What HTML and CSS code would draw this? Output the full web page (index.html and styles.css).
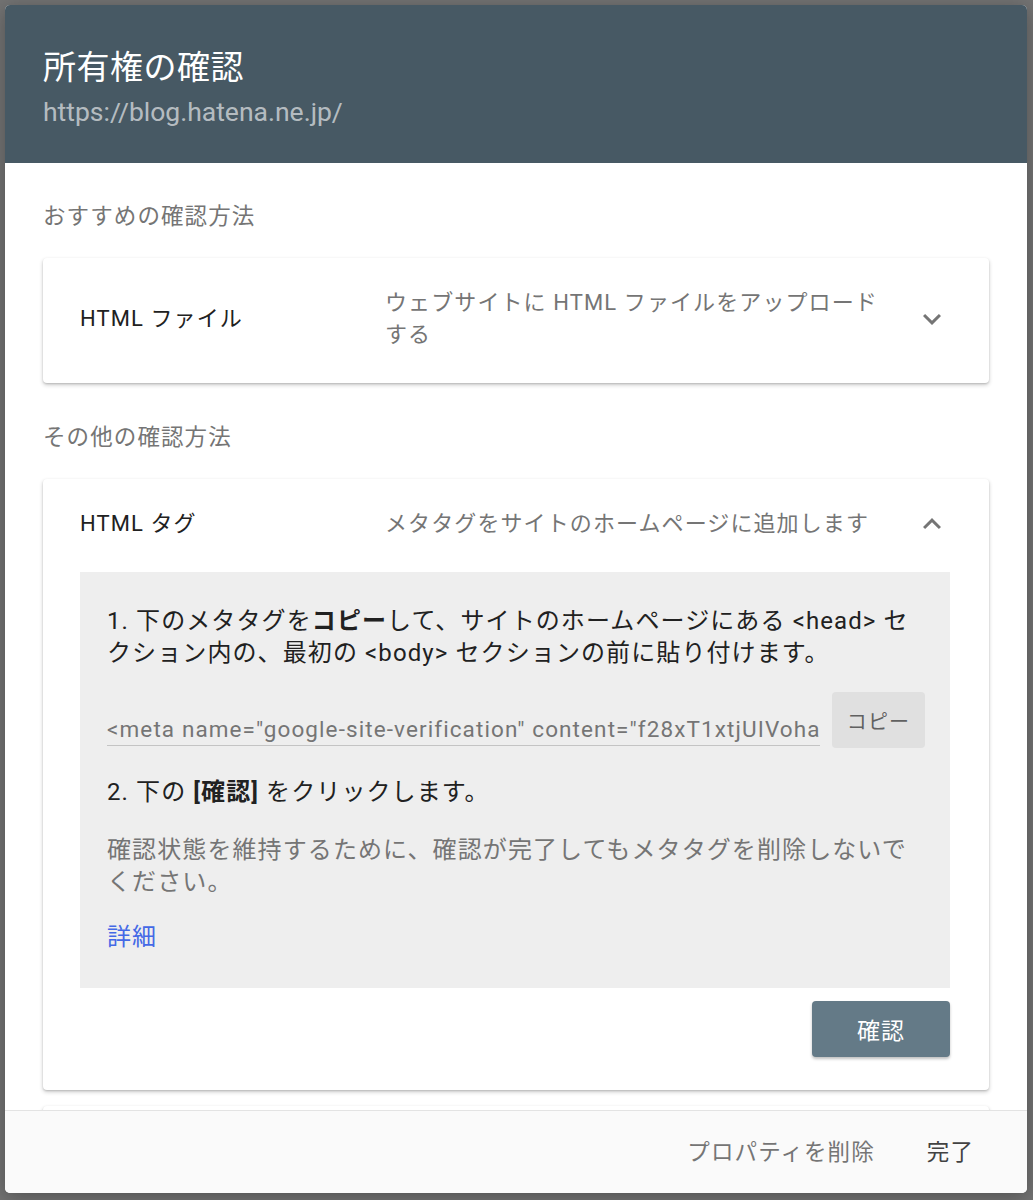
FILE: index.html
```html
<!DOCTYPE html>
<html lang="ja">
<head>
  <meta charset="utf-8">
  <title>所有権の確認</title>
  <link rel="stylesheet" href="styles.css">
</head>
<body>
  <div class="dialog">
    <div class="dialog-header">
      <div class="dialog-title">所有権の確認</div>
      <div class="dialog-url">https://blog.hatena.ne.jp/</div>
    </div>

    <div class="dialog-body">
      <div class="section-label">おすすめの確認方法</div>
      <div class="card">
        <div class="card-head">
          <div class="card-title">HTML ファイル</div>
          <div class="card-desc">ウェブサイトに HTML ファイルをアップロードする</div>
          <svg class="chevron" viewBox="0 0 24 24"><path d="M16.59 8.59L12 13.17 7.41 8.59 6 10l6 6 6-6z"/></svg>
        </div>
      </div>

      <div class="section-label second">その他の確認方法</div>
      <div class="card open">
        <div class="card-head">
          <div class="card-title">HTML タグ</div>
          <div class="card-desc">メタタグをサイトのホームページに追加します</div>
          <svg class="chevron" viewBox="0 0 24 24"><path d="M12 8l-6 6 1.41 1.41L12 10.83l4.59 4.58L18 14z"/></svg>
        </div>
        <div class="steps">
          <p class="step">1. 下のメタタグを<b>コピー</b>して、サイトのホームページにある &lt;head&gt; セクション内の、最初の &lt;body&gt; セクションの前に貼り付けます。</p>
          <div class="copy-row">
            <div class="meta-input">&lt;meta name="google-site-verification" content="f28xT1xtjUIVoha</div>
            <button class="copy-btn">コピー</button>
          </div>
          <p class="step step-two">2. 下の <b>[確認]</b> をクリックします。</p>
          <p class="note">確認状態を維持するために、確認が完了してもメタタグを削除しないでください。</p>
          <a class="more" href="#">詳細</a>
        </div>
        <div class="actions">
          <button class="verify-btn">確認</button>
        </div>
      </div>

      <!-- next method, scrolled out of view -->
      <div class="card peek"></div>
    </div>

    <div class="dialog-footer">
      <button class="text-btn muted">プロパティを削除</button>
      <button class="text-btn">完了</button>
    </div>
  </div>
</body>
</html>
```

FILE: styles.css
```css
body {
    margin: 0;
    padding: 5px 6px 7px 5px;
    background: #737373;
    font-family: Roboto, "Noto Sans CJK JP", sans-serif;
    letter-spacing: 1.1px;
}
.dialog {
    height: 1188px;
    display: flex;
    flex-direction: column;
    background: #fff;
    border-radius: 5px;
    overflow: hidden;
    box-shadow: 0 4px 20px rgba(0, 0, 0, 0.3);
}
.dialog-header {
    background: #475964;
    padding: 41px 38px 35px;
    color: #fff;
}
.dialog-title {
    font-size: 33px;
    line-height: 44px;
    letter-spacing: 0.5px;
}
.dialog-url {
    margin-top: 6px;
    font-size: 26.5px;
    line-height: 32px;
    letter-spacing: 0;
    color: rgba(255, 255, 255, 0.62);
}
.dialog-body {
    flex: 1;
    overflow: hidden;
    padding: 37px 38px 0 38px;
}
.section-label {
    font-size: 22.5px;
    line-height: 32px;
    color: #757575;
}
.section-label.second {
    margin-top: 38px;
}
.card {
    margin-top: 26px;
    background: #fff;
    border-radius: 4px;
    padding: 0 39px 0 37px;
    box-shadow: 0 2px 4px rgba(0, 0, 0, 0.2), 0 1px 2px rgba(0, 0, 0, 0.14);
}
.card + .card {
    margin-top: 16px;
}
.card.open {
    padding-bottom: 33px;
}
.card.peek {
    height: 120px;
}
.card-head {
    display: flex;
    align-items: center;
    padding: 29px 0 32px;
    font-size: 22px;
    line-height: 32px;
}
.card-title {
    width: 305px;
    color: #212121;
}
.card-desc {
    flex: 1;
    margin-right: 20px;
    color: #757575;
}
.chevron {
    width: 36px;
    height: 36px;
    margin: -2px 0;
    fill: #757575;
}
.steps {
    background: #eeeeee;
    padding: 33px 25px 35px 27px;
    font-size: 24px;
    line-height: 32px;
    color: #212121;
}
.steps p {
    margin: 0;
}
.steps b {
    font-weight: 700;
}
.copy-row {
    margin-top: 23px;
    display: flex;
    gap: 12px;
    height: 56px;
}
.meta-input {
    flex: 1;
    align-self: flex-end;
    margin-bottom: 2px;
    font-size: 22.5px;
    line-height: 32px;
    color: #757575;
    white-space: nowrap;
    overflow: hidden;
    border-bottom: 1px solid #c4c4c4;
}
.copy-btn {
    width: 93px;
    border: none;
    border-radius: 4px;
    background: #e0e0e0;
    color: #616161;
    font-family: inherit;
    font-size: 20px;
    letter-spacing: 1.1px;
}
.step-two {
    margin-top: 28px !important;
}
.note {
    margin-top: 26px !important;
    color: #757575;
}
.more {
    display: block;
    margin-top: 23px;
    color: #4469e6;
    text-decoration: none;
}
.actions {
    display: flex;
    justify-content: flex-end;
    margin-top: 13px;
}
.verify-btn {
    width: 138px;
    height: 56px;
    border: none;
    border-radius: 4px;
    background: #647a87;
    color: #fff;
    font-family: inherit;
    font-size: 23px;
    letter-spacing: 1.1px;
    box-shadow: 0 2px 3px rgba(0, 0, 0, 0.25);
}
.dialog-footer {
    height: 82px;
    border-top: 1px solid #e3e3e3;
    background: #fafafa;
    display: flex;
    align-items: center;
    justify-content: flex-end;
    gap: 52px;
    padding-right: 53px;
}
.text-btn {
    border: none;
    background: none;
    padding: 0;
    font-family: inherit;
    font-size: 22.5px;
    line-height: 32px;
    letter-spacing: 1.1px;
    color: #424242;
}
.text-btn.muted {
    color: #757575;
}
```
